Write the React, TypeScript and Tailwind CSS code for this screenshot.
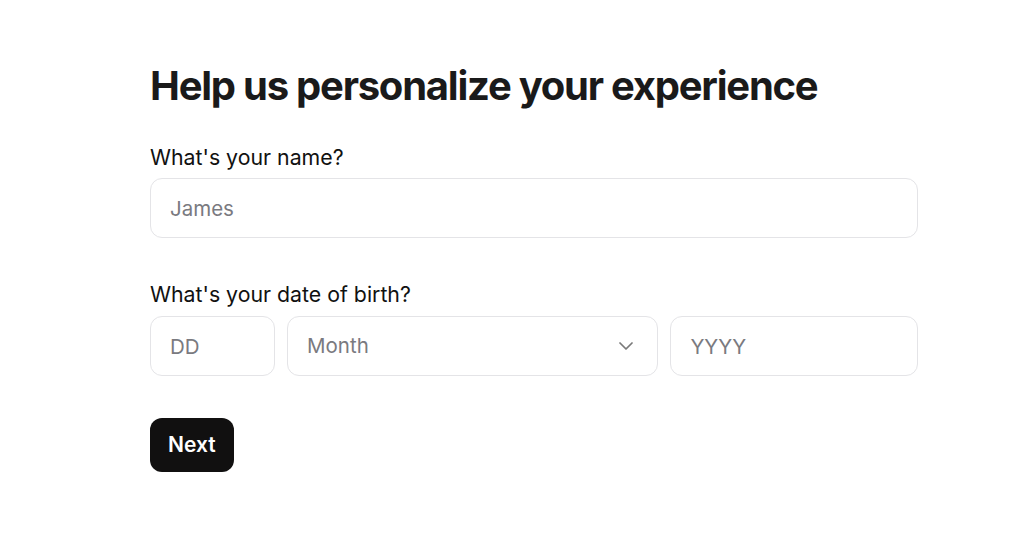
import React, { useState } from 'react';

const ChevronDown = () => (
  <svg className="w-[14px] h-[8px] text-[#7a7a7a]" viewBox="0 0 14 8" fill="none" stroke="currentColor" strokeWidth={1.75} strokeLinecap="round" strokeLinejoin="round">
    <path d="M1 1l6 6 6-6" />
  </svg>
);

export default function App() {
  const [name, setName] = useState('');
  const [day, setDay] = useState('');
  const [year, setYear] = useState('');

  const inputClass =
    'h-[60px] w-full rounded-xl border border-[#e4e4e7] bg-white px-[19px] text-[20.5px] text-[#18181b] placeholder:text-[#7a7a80] outline-none';

  return (
    <div className="min-h-screen bg-white" style={{ fontFamily: 'Inter, "Noto Sans", sans-serif' }}>
      <div className="ml-[150px] w-[768px] pt-[62px]">
        <h1 className="text-[40px] font-bold leading-[48px] tracking-[-0.031em] text-[#1a1a1a]">
          Help us personalize your experience
        </h1>

        <label className="mt-[34px] block text-[21.3px] font-normal leading-[26px] text-[#111]">What's your name?</label>
        <input
          className={`${inputClass} mt-[8px]`}
          placeholder="James"
          value={name}
          onChange={(e) => setName(e.target.value)}
        />

        <label className="mt-[43px] block text-[21.3px] font-normal leading-[26px] text-[#111]">What's your date of birth?</label>
        <div className="mt-[9px] flex gap-3">
          <div className="w-[125px] shrink-0">
            <input className={inputClass} placeholder="DD" value={day} onChange={(e) => setDay(e.target.value)} />
          </div>
          <div className="flex-[3] min-w-0">
            <div className="flex h-[60px] w-full items-center justify-between rounded-xl border border-[#e4e4e7] bg-white pl-[19px] pr-[24px] text-[20.5px] text-[#7a7a80]">
              <span>Month</span>
              <ChevronDown />
            </div>
          </div>
          <div className="flex-[2] min-w-0">
            <input className={inputClass} placeholder="YYYY" value={year} onChange={(e) => setYear(e.target.value)} />
          </div>
        </div>

        <button className="mt-[42px] h-[54px] rounded-xl bg-[#111010] px-[18px] text-[21px] font-semibold text-white">
          Next
        </button>
      </div>
    </div>
  );
}
